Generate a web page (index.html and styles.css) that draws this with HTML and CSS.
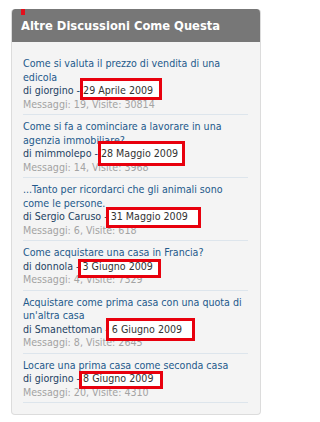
FILE: index.html
```html
<!DOCTYPE html>
<html lang="it">
<head>
<meta charset="utf-8">
<title>Altre Discussioni Come Questa</title>
<link rel="stylesheet" href="styles.css">
</head>
<body>
<div class="panel">
  <div class="head"><span class="tab"></span>Altre Discussioni Come Questa</div>
  <ul class="list">
    <li class="item">
      <a class="title" href="#">Come si valuta il prezzo di vendita di una edicola</a>
      <div class="by">di <a href="#" class="user">giorgino</a> - <span class="date">29 Aprile 2009</span></div>
      <div class="stats">Messaggi: 19, Visite: 30814</div>
    </li>
    <li class="item">
      <a class="title" href="#">Come si fa a cominciare a lavorare in una agenzia immobiliare?</a>
      <div class="by">di <a href="#" class="user">mimmolepo</a> - <span class="date">28 Maggio 2009</span></div>
      <div class="stats">Messaggi: 14, Visite: 3968</div>
    </li>
    <li class="item">
      <a class="title" href="#">...Tanto per ricordarci che gli animali sono come le persone.</a>
      <div class="by">di <a href="#" class="user">Sergio Caruso</a> - <span class="date">31 Maggio 2009</span></div>
      <div class="stats">Messaggi: 6, Visite: 618</div>
    </li>
    <li class="item">
      <a class="title" href="#">Come acquistare una casa in Francia?</a>
      <div class="by">di <a href="#" class="user">donnola</a> - <span class="date">3 Giugno 2009</span></div>
      <div class="stats">Messaggi: 4, Visite: 7329</div>
    </li>
    <li class="item">
      <a class="title" href="#">Acquistare come prima casa con una quota di un'altra casa</a>
      <div class="by">di <a href="#" class="user">Smanettoman</a> - <span class="date">6 Giugno 2009</span></div>
      <div class="stats">Messaggi: 8, Visite: 2645</div>
    </li>
    <li class="item">
      <a class="title" href="#">Locare una prima casa come seconda casa</a>
      <div class="by">di <a href="#" class="user">giorgino</a> - <span class="date">8 Giugno 2009</span></div>
      <div class="stats">Messaggi: 20, Visite: 4310</div>
    </li>
  </ul>
</div>
<div class="mark m1"></div>
<div class="mark m2"></div>
<div class="mark m3"></div>
<div class="mark m4"></div>
<div class="mark m5"></div>
<div class="mark m6"></div>
</body>
</html>
```
FILE: styles.css
```css
html, body {
  margin: 0;
  padding: 0;
  background: #ffffff;
}
body {
  position: relative;
  width: 274px;
  height: 422px;
  overflow: hidden;
  font-family: "DejaVu Sans Condensed", "DejaVu Sans", sans-serif;
  font-stretch: condensed;
}
.panel {
  margin: 9px 0 0 11px;
  width: 250px;
  box-sizing: border-box;
  border-radius: 4px;
  background: #f4f4f4;
  border: 1px solid #dcdcdc;
  border-top: none;
  overflow: hidden;
}
.head {
  position: relative;
  height: 33px;
  background: #777777;
  color: #ffffff;
  font-weight: bold;
  font-size: 12.8px;
  line-height: 33px;
  padding-left: 10px;
  margin: 0 -1px;
  border-radius: 4px 4px 0 0;
  white-space: nowrap;
}
.tab {
  position: absolute;
  left: 10px;
  top: 0;
  width: 4px;
  height: 6px;
  background: #e2101c;
}
.list {
  list-style: none;
  margin: 0;
  padding: 15px 12px 11px 11px;
}
.item {
  position: relative;
  z-index: 2;
  font-size: 10.6px;
  line-height: 13.5px;
  padding-bottom: 3px;
  border-bottom: 1px solid #dde5ec;
}
.item + .item {
  margin-top: 5px;
}
.title {
  color: #23598b;
  text-decoration: none;
}
.by {
  color: #1d4263;
}
.user {
  color: #1d4263;
  text-decoration: none;
}
.date {
  color: #333333;
}
.stats {
  color: #a3a3a3;
}
.mark {
  position: absolute;
}
.mark::before,
.mark::after {
  content: "";
  position: absolute;
  inset: 0;
}
.mark::before {
  background: #ffffff;
  z-index: 1;
}
.mark::after {
  border: 3px solid #e8000d;
  z-index: 3;
}
.m1 { left: 80px; top: 78px; width: 82px; height: 22px; }
.m2 { left: 98px; top: 141px; width: 87px; height: 25px; }
.m3 { left: 106px; top: 207px; width: 95px; height: 21px; }
.m4 { left: 78px; top: 259px; width: 83px; height: 19px; }
.m5 { left: 106px; top: 318px; width: 89px; height: 23px; }
.m6 { left: 79px; top: 371px; width: 84px; height: 18px; }
```
